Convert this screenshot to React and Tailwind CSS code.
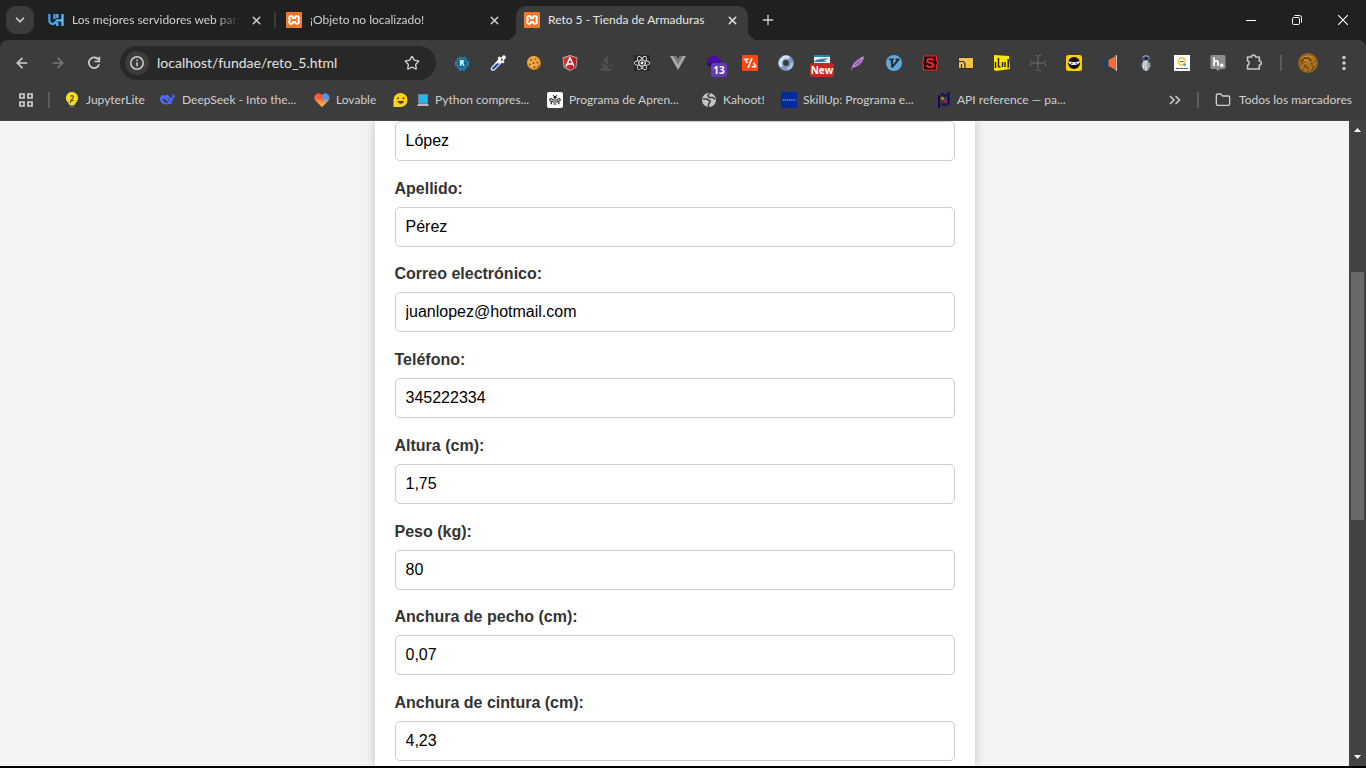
import React from "react";
import { ChevronDown, ArrowLeft, ArrowRight, X, Plus, Star, Folder } from "lucide-react";
import { FaJava, FaReact } from "react-icons/fa";
import { SiXampp } from "react-icons/si";

function XamppIcon() {
  return (
    <span className="flex size-4 shrink-0 rounded-[2px] bg-white">
      <SiXampp className="size-4 text-[#f37623]" />
    </span>
  );
}

function HostIcon() {
  return (
    <svg viewBox="0 0 16 16" className="size-4 shrink-0" aria-hidden="true">
      <defs>
        <linearGradient id="host" x1="0" x2="1">
          <stop offset="0" stopColor="#3d9bff" />
          <stop offset="1" stopColor="#5cc8ff" />
        </linearGradient>
      </defs>
      <path d="M1.300 2v6.500a3.300 3.300 0 0 0 5.800 2.200L9 8.300h5.500M9.300 2v4M9.300 10.500V14M14.500 2v12M6.500 2v5" fill="none" stroke="url(#host)" strokeWidth="2.200" />
    </svg>
  );
}

const svg = "size-4 shrink-0 overflow-visible";

const extensions = [
  {
    name: "R",
    icon: (
      <svg viewBox="0 0 16 16" className={svg}>
        <path d="M5 0l1 2h4l1-2v3h2v3h1v5h-1v2l-2 1v2H9v-1H7v1H5v-2l-2-1v-2H2V6h1V3h2z" fill="#1f7ba6" />
        <path d="M1.500 6v5M14.500 6v5" stroke="#2585b0" />
        <circle cx="8" cy="8.300" r="4.300" fill="#165b80" />
        <text x="8" y="11.200" textAnchor="middle" fontSize="8" fontWeight="700" fill="#fff" fontFamily="Open Sans, sans-serif">R</text>
      </svg>
    ),
  },
  {
    name: "Cuentagotas",
    icon: (
      <svg viewBox="0 0 16 16" className={svg}>
        <path d="M9 3.500L12.500 7 5 15c-1 1-2.800 1-3.600.2-.9-.8-.8-2.200.2-3.200z" fill="#f4f6fa" />
        <path d="M6.500 8.500h3.300L4.500 14.100c-.6.600-1.700.7-2.200.2-.5-.5-.3-1.300.2-1.900z" fill="#2447b5" />
        <path d="M7.500 3L9.300 1.500 11 2.800 13 .6c1.200-1 3.800 1.200 2.500 2.900L13.400 5.500l1.100 1.400L13 8.500z" fill="#fff" />
        <path d="M11 5.500l1.500-1.500" stroke="#222" strokeWidth="1.300" />
      </svg>
    ),
  },
  {
    name: "Cookies",
    icon: (
      <svg viewBox="0 0 16 16" className={svg}>
        <circle cx="8" cy="8" r="7" fill="#c67a20" />
        <circle cx="7.500" cy="7.400" r="6.300" fill="#f0a844" />
        <g fill="#8b4716">
          <circle cx="5" cy="5" r="1" />
          <circle cx="9.500" cy="4" r=".8" />
          <circle cx="11.500" cy="7.500" r="1" />
          <circle cx="7.500" cy="8" r=".9" />
          <circle cx="4" cy="9.500" r=".9" />
          <circle cx="8.500" cy="12" r="1" />
          <circle cx="12" cy="11" r=".7" />
        </g>
      </svg>
    ),
  },
  {
    name: "Angular",
    icon: (
      <svg viewBox="0 0 16 16" className={svg}>
        <path d="M8 0l7.500 2.600-1.200 10L8 16l-6.300-3.400L.5 2.600z" fill="#b9b9b9" />
        <path d="M8 1l6.500 2.300-1 8.700L8 15l-5.500-3-1-8.700z" fill="#d32f2f" />
        <path d="M8 1l6.500 2.300-1 8.700L8 15z" fill="#b52026" />
        <path d="M4 11.500L8 2.800l4 8.700M5.500 9h5" fill="none" stroke="#fff" strokeWidth="1.500" />
      </svg>
    ),
  },
  { name: "Java", icon: <FaJava className="size-4 text-[#6b6b6b]" /> },
  {
    name: "React",
    icon: (
      <span className="flex size-4 items-center justify-center bg-[#292929]">
        <FaReact className="size-4 text-white" />
      </span>
    ),
  },
  {
    name: "Vue",
    icon: (
      <svg viewBox="0 0 16 16" className={svg}>
        <path d="M0 1h6l2 3.500L10 1h6L8 15z" fill="#a8a8a8" />
        <path d="M3.200 1H6l2 3.500L10 1h2.800L8 9.500z" fill="#777" />
      </svg>
    ),
  },
  {
    name: "Capas",
    icon: (
      <svg viewBox="0 0 16 16" className={svg}>
        <path d="M0 9l8-5 8 5-8 5z" fill="#2a0a70" />
        <path d="M0 5l8-5 8 5-8 5z" fill="#4a0da8" />
      </svg>
    ),
    badge: "13",
    badgeClass: "left-[5px] w-4 bg-[#673ab7]",
  },
  {
    name: "Conversor",
    icon: (
      <svg viewBox="0 0 16 16" className={svg}>
        <rect width="16" height="16" rx="1" fill="#ff4713" />
        <path d="M6.500 4.300H2.800L5.500 8M10 3L6 13M14 11.700H9.800M14 11.700L11.500 7.800" fill="none" stroke="#fff" strokeWidth="1.600" />
      </svg>
    ),
  },
  {
    name: "Anillo",
    icon: (
      <svg viewBox="0 0 16 16" className={svg}>
        <circle cx="8" cy="8" r="5.400" fill="none" stroke="#7d9cc0" strokeWidth="5" />
        <path d="M3.500 11.500a6 6 0 0 1 .5-7.500c2-2 5-2.300 7-1" fill="none" stroke="#d6e3ef" strokeWidth="3" />
        <path d="M9.500 14c3.200-.8 4.500-3 4.300-6" fill="none" stroke="#b4cae0" strokeWidth="2" />
      </svg>
    ),
  },
  {
    name: "Selector",
    icon: (
      <svg viewBox="0 0 16 16" className={svg}>
        <path d="M0 0h16v12H0z" fill="#e9eef3" />
        <path d="M0 0h16v2H0zM0 7c1-3 8-3.500 15-3.500L10 5.500l3 1.500z" fill="#327eac" />
      </svg>
    ),
    badge: "New",
    badgeClass: "-left-1 w-6 bg-[#c62828]",
  },
  {
    name: "Pluma",
    icon: (
      <svg viewBox="0 0 16 16" className={svg}>
        <path d="M1 16c0-5 2-9 7-12l6.500-3.500C14 5 12 9 8 11l-4 1.500z" fill="#8e55b5" />
        <path d="M3 12c2-4 5-7 10-10M4 12c4-2 7-5 9-9" fill="none" stroke="#d5a8ee" strokeWidth="1" />
      </svg>
    ),
  },
  {
    name: "Vimium",
    icon: (
      <svg viewBox="0 0 16 16" className={svg}>
        <circle cx="8" cy="8" r="8" fill="#62a8dc" />
        <path d="M3 3.500h5v1.300l-1 .4v4L10.300 5.500 9.500 4.800V3.500H13.500V5L7 12.800H5.200L4.500 5.200 3 4.800z" fill="#263238" />
      </svg>
    ),
  },
  {
    name: "S",
    icon: (
      <svg viewBox="0 0 16 16" className={svg}>
        <path d="M1.500 1h13v5L15.500 7v2l-1 1v5h-13v-5L.5 9V7l1-1z" fill="#270909" stroke="#f12626" strokeWidth="1.100" />
        <text x="8" y="13" textAnchor="middle" fontSize="14" fontWeight="700" fill="#f32b2b" fontFamily="Liberation Sans, sans-serif">S</text>
      </svg>
    ),
  },
  {
    name: "Carpeta",
    icon: (
      <svg viewBox="0 0 16 16" className={svg}>
        <path d="M.5 2.500h15v11H.5z" fill="#f3c14b" stroke="#35301f" />
        <path d="M1 6.500h3c2 0 3 1.300 3 3V13M3.500 13V9" fill="none" stroke="#302b22" strokeWidth="1.200" />
      </svg>
    ),
  },
  {
    name: "Estadísticas",
    icon: (
      <svg viewBox="0 0 16 16" className={svg}>
        <path d="M0 0l15 1 1 13-14 2-2-1z" fill="#ffe500" />
        <path d="M1.500 7v6M4.500 3v9M4.500 12h2M8.500 7v5M11 7v5M14.200 4v9" stroke="#282820" strokeWidth="1.500" />
      </svg>
    ),
  },
  {
    name: "Reglas",
    icon: (
      <svg viewBox="0 0 16 16" className={svg}>
        <path d="M8 1v14M1 8h14M5.500.5h2M9 .5h2M5.500 15.500h2M9 15.500h2M.5 5.500v2M.5 9v2M15.500 5.500v2M15.500 9v2" stroke="#6c6c6c" fill="none" />
      </svg>
    ),
  },
  {
    name: "Ninja",
    icon: (
      <svg viewBox="0 0 16 16" className={svg}>
        <rect width="16" height="16" rx="2.500" fill="#ffce00" />
        <circle cx="8" cy="8" r="6" fill="#111" />
        <path d="M2.200 6c3 1.500 8.600 1.500 11.600 0 .5 5-11.600 5.500-11.600 0z" fill="#fff" />
        <path d="M4.500 7.500l2.500.5-1.300 1zM11.500 7.500L9 8l1.300 1z" fill="#111" />
      </svg>
    ),
  },
  {
    name: "Megáfono",
    icon: (
      <svg viewBox="0 0 16 16" className={svg}>
        <path d="M.5 4.500H7v6H5.500l.5 5H3.500L2 10.500H.5l-1-2v-2z" fill="#263f59" />
        <path d="M6.500 5l7-4v14l-7-4z" fill="#f06c3a" />
        <path d="M14.300 0v16" stroke="#e7edf2" />
      </svg>
    ),
  },
  {
    name: "Robot",
    icon: (
      <svg viewBox="0 0 16 16" className={svg}>
        <ellipse cx="8" cy="10.500" rx="4" ry="5.200" fill="#a2a9ae" />
        <path d="M8 6v10M6 6l-.5 8" stroke="#dde1e4" strokeWidth="1.400" />
        <rect x="4.500" y=".5" width="7" height="5" rx="2.500" fill="#c7cdd1" />
        <rect x="5" y="1.500" width="6" height="3.400" rx="1.700" fill="#14203a" />
        <path d="M6 3h1M9 3h1" stroke="#4b90ff" />
        <path d="M3.500 8v4M12.500 8v4" stroke="#66707a" />
      </svg>
    ),
  },
  {
    name: "Buscador",
    icon: (
      <svg viewBox="0 0 16 16" className={svg}>
        <path d="M0 0h16v16H0z" fill="#fff" />
        <circle cx="7.800" cy="6.500" r="3.500" fill="none" stroke="#f2c230" strokeWidth="1.400" />
        <path d="M6 6.500h3.500" stroke="#555" />
        <path d="M9.500 9l2 1.500" stroke="#3492d4" strokeWidth="1.800" />
        <path d="M2 13.500h12" stroke="#444" strokeDasharray="2 .5" />
      </svg>
    ),
  },
  {
    name: "Hypothesis",
    icon: (
      <svg viewBox="0 0 16 16" className={svg}>
        <path d="M1.500 0h13l1 1v12l-1 1H10l-2 2-2-2H1.500l-1-1V1z" fill="#8d8d8d" />
        <path d="M4 2.500V11M4 7.500c.5-2 4-2.500 4 0V11M11 9.500h1.500V11H11z" fill="none" stroke="#fff" strokeWidth="1.700" />
      </svg>
    ),
  },
  {
    name: "Extensiones",
    icon: (
      <svg viewBox="0 0 16 16" className={svg}>
        <path d="M1.500 2H5.500a2 2 0 0 1 4 0h3.800v4a2 2 0 0 1 0 4v4H1.500v-3.800a2.300 2.300 0 0 0 0-4.400z" fill="none" stroke="#c7c7c7" strokeWidth="1.600" strokeLinejoin="round" />
      </svg>
    ),
  },
];

const bookmarks = [
  {
    text: "JupyterLite",
    width: "w-24",
    icon: (
      <svg viewBox="0 0 16 16" className={svg}>
        <path d="M8 0a6 6 0 0 0-4 10.500L5.500 13h5l1.500-2.500A6 6 0 0 0 8 0z" fill="#f7dc26" />
        <path d="M5.800 13h4.400v1.500L8 16l-2.200-1.500z" fill="#687074" />
        <path d="M6.500 4.500c1-1.300 3.300-1 2.700.8L7 8.500h3M6 11l1.500-3" fill="none" stroke="#5c541b" strokeWidth="1.200" />
      </svg>
    ),
  },
  {
    text: "DeepSeek - Into the...",
    width: "w-[154px]",
    icon: (
      <svg viewBox="0 0 16 16" className={svg}>
        <path d="M15.700 3.200c-.7.500-1.400.6-2 .3-.6-.4-.9-1-1-1.700-.8.700-.9 1.700-.3 2.600.3.600.8 1 1.100 1.400-.4 2-1.300 3.700-2.500 5l1.400 1.200c-1.200.7-2 .3-2.900-.2C4.500 13.700 0 11 0 6.700 0 3.500 3.600 2.200 5.800 3.800c.8-.3.400-1 .8-1.300 1.500.6 3 2 4 3.800l.8-.5c1.500-.3 3.800-.5 4.300-2.600z" fill="#4d6bfe" />
        <path d="M2.500 6.500c2-.5 4.500 2.500 6 4.500-2.500.8-5.700-1.400-6-4.500z" fill="#3c3c3c" />
        <path d="M7.600 6.800c1.200-.3 2 .7 2 2l-1.200-.5" fill="none" stroke="#3c3c3c" strokeWidth=".9" />
      </svg>
    ),
  },
  {
    text: "Lovable",
    width: "w-[79px]",
    icon: (
      <svg viewBox="0 0 16 16" className={svg}>
        <defs>
          <linearGradient id="heart" x1="0" y1=".3" x2="1" y2=".3">
            <stop offset="0" stopColor="#f26b35" />
            <stop offset=".4" stopColor="#f0553c" />
            <stop offset=".65" stopColor="#5f8fe0" />
            <stop offset="1" stopColor="#2f9df2" />
          </linearGradient>
          <linearGradient id="heartlow" x1="0" y1="0" x2="0" y2="1">
            <stop offset=".3" stopColor="#ffa33c" stopOpacity="0" />
            <stop offset=".75" stopColor="#ffa33c" />
          </linearGradient>
        </defs>
        <path d="M8 15L1.500 8.500C-2 4 4-1.500 8 3c4-4.500 10 1 6.500 5.500z" fill="url(#heart)" />
        <path d="M8 15L1.500 8.500C-2 4 4-1.500 8 3c4-4.500 10 1 6.500 5.500z" fill="url(#heartlow)" />
      </svg>
    ),
  },
  {
    text: "Python compres...",
    width: "w-[154px]",
    icon: (
      <span className="flex shrink-0 gap-2">
        <svg viewBox="0 0 16 16" className={svg}>
          <path d="M.5 15V8A7 7 0 1 1 7.500 15z" fill="#ffd21e" />
          <path d="M4.500 9h6.500c-.3 3.500-6 3.500-6.500 0z" fill="#58401f" />
          <circle cx="5" cy="6.300" r="1" fill="#58401f" />
          <circle cx="10.500" cy="6.300" r="1" fill="#58401f" />
        </svg>
        <svg viewBox="0 0 12 16" className="h-4 w-3">
          <path d="M1.500 2.500h9v9h-9z" fill="#23b7ee" stroke="#75818b" />
          <path d="M1 12h10l1 2H0z" fill="#b3bcc3" />
        </svg>
      </span>
    ),
  },
  {
    text: "Programa de Apren...",
    width: "w-[154px]",
    icon: (
      <svg viewBox="0 0 16 16" className={svg}>
        <rect width="16" height="16" rx="2" fill="#fff" />
        <path d="M6 3l1 1.500M10 3L9 4.500" stroke="#222" />
        <circle cx="8" cy="5.200" r="1.500" fill="#222" />
        <path d="M6 8C4 5.500 2 7 3 8.500s2 1 3 .5M10 8c2-2.500 4-1 3 .5s-2 1-3 .5M5.500 9.800C3.500 10 3.500 12 5 12M10.500 9.800c2 .2 2 2.200.5 2.200" fill="none" stroke="#222" strokeWidth="1.100" />
        <path d="M6 8h4M6 10h4M6.500 12h3" stroke="#222" strokeWidth="1.200" />
      </svg>
    ),
  },
  {
    text: "Kahoot!",
    width: "w-20",
    icon: (
      <svg viewBox="0 0 16 16" className={svg}>
        <circle cx="8" cy="8" r="7" fill="#c4c7c9" />
        <path d="M2 7h4l1.500 1.500H9v1.800L7.500 12v3M9 1.500L6.800 3.500l1.200 2h4l2 2" fill="none" stroke="#3c3c3c" strokeWidth="1.500" />
      </svg>
    ),
  },
  {
    text: "SkillUp: Programa e...",
    width: "w-[154px]",
    icon: (
      <svg viewBox="0 0 16 16" className={svg}>
        <path d="M0 0h16v16H0z" fill="#002b9d" />
        <path d="M1.500 8h13" stroke="#9aaee2" strokeDasharray="1.500 .5" />
      </svg>
    ),
  },
  {
    text: "API reference — pa...",
    width: "w-[154px]",
    icon: (
      <svg viewBox="0 0 16 16" className={svg}>
        <path d="M4 3v13M7.500 1v3M7.500 11v3M10.500 2v3M10.500 11.500v3M13.500 0v13" stroke="#150458" strokeWidth="1.900" />
        <path d="M7.500 5.500v2" stroke="#ffca00" strokeWidth="2" />
        <path d="M10.500 8v2" stroke="#e70488" strokeWidth="2" />
      </svg>
    ),
  },
];

const fields = [
  { id: "apellido", label: "Apellido:", value: "Pérez" },
  { id: "correo", label: "Correo electrónico:", value: "juanlopez@hotmail.com", type: "email" },
  { id: "telefono", label: "Teléfono:", value: "345222334", type: "tel" },
  { id: "altura", label: "Altura (cm):", value: "1,75" },
  { id: "peso", label: "Peso (kg):", value: "80" },
  { id: "pecho", label: "Anchura de pecho (cm):", value: "0,07" },
  { id: "cintura", label: "Anchura de cintura (cm):", value: "4,23" },
];

const inputClass =
  "block h-10 w-full rounded-[5px] border border-[#cccccc] bg-white px-[10px] text-base text-black outline-none";

function Tab({ icon, title, active }) {
  return (
    <div
      className={
        active
          ? "relative flex h-[34px] w-[232px] items-center rounded-t-[10px] bg-[#3c3c3c] px-2 pb-[6px] text-[#e8e8e8]"
          : "flex h-[34px] w-[232px] items-center px-2 pb-[6px] text-[#d0d0d0]"
      }
    >
      {active && (
        <>
          <span className="absolute bottom-0 -left-[10px] size-[10px] rounded-br-[10px] shadow-[4px_4px_0_#3c3c3c] [clip-path:inset(0)]" />
          <span className="absolute -right-[10px] bottom-0 size-[10px] rounded-bl-[10px] shadow-[-4px_4px_0_#3c3c3c] [clip-path:inset(0)]" />
        </>
      )}
      {icon}
      <span
        className={
          active
            ? "ml-2 min-w-0 flex-1 overflow-hidden whitespace-nowrap"
            : "ml-2 min-w-0 flex-1 overflow-hidden whitespace-nowrap [mask-image:linear-gradient(to_right,black_calc(100%-24px),transparent)]"
        }
      >
        {title}
      </span>
      <button type="button" aria-label="Cerrar pestaña" className="ml-2 flex size-4 items-center justify-center">
        <X size={13} strokeWidth={2.7} />
      </button>
    </div>
  );
}

function Separator() {
  return <div className="h-4 w-[2px] shrink-0 bg-[#5c5c5c]" />;
}

export default function App() {
  return (
    <div className="flex h-screen flex-col overflow-hidden border-b-2 border-black bg-[#1f2020]">
      <header className="shrink-0 font-['Lato','Open_Sans',sans-serif] text-xs text-[#d0d0d0]">
        <div className="flex h-10 items-end">
          <button type="button" aria-label="Buscar pestañas" className="mb-[6px] ml-[6px] flex size-7 shrink-0 items-center justify-center rounded-[10px] bg-[#3c3c3c]">
            <ChevronDown size={14} strokeWidth={3} />
          </button>
          <nav aria-label="Pestañas" className="ml-[6px] flex items-end">
            <Tab icon={<HostIcon />} title="Los mejores servidores web para" />
            <div className="mx-[2px] mb-3 h-4 w-[2px] bg-[#3c3c3c]" />
            <Tab icon={<XamppIcon />} title="¡Objeto no localizado!" />
            <div className="ml-[6px]">
              <Tab icon={<XamppIcon />} title="Reto 5 - Tienda de Armaduras" active />
            </div>
          </nav>
          <button type="button" aria-label="Nueva pestaña" className="mb-3 ml-3 flex size-4 items-center justify-center">
            <Plus size={16} strokeWidth={2} />
          </button>
          <div className="ml-auto flex self-stretch text-white">
            <button type="button" aria-label="Minimizar" className="flex w-[46px] items-center justify-center">
              <svg viewBox="0 0 10 10" className="size-[10px]"><path d="M0 5.500h10" stroke="currentColor" /></svg>
            </button>
            <button type="button" aria-label="Restaurar" className="flex w-[46px] items-center justify-center">
              <svg viewBox="0 0 10 10" className="size-[10px] overflow-visible">
                <rect x=".5" y="2.500" width="7" height="7" rx="1.200" fill="none" stroke="currentColor" />
                <path d="M2.500.5H7.500A2 2 0 0 1 9.500 2.500v5" fill="none" stroke="currentColor" />
              </svg>
            </button>
            <button type="button" aria-label="Cerrar" className="flex w-[46px] items-center justify-center">
              <svg viewBox="0 0 10 10" className="size-[10px]"><path d="M0 0l10 10M10 0L0 10" stroke="currentColor" strokeWidth="1.100" /></svg>
            </button>
          </div>
        </div>

        <div className="h-[81px] rounded-t-[8px] border-b border-[#474747] bg-[#3c3c3c]">
          <div className="flex h-[46px] items-center pl-[14px]">
            <div className="flex gap-5">
              <button type="button" aria-label="Atrás"><ArrowLeft size={16} strokeWidth={2.5} /></button>
              <button type="button" aria-label="Adelante" className="text-[#777777]"><ArrowRight size={16} strokeWidth={2.5} /></button>
              <button type="button" aria-label="Recargar">
                <svg viewBox="0 0 16 16" className="size-4">
                  <path d="M12.600 4.900A5.300 5.300 0 1 0 13.200 9.200" fill="none" stroke="currentColor" strokeWidth="1.700" />
                  <path d="M13.300 1.800v4.700H8.600" fill="none" stroke="currentColor" strokeWidth="1.700" />
                </svg>
              </button>
            </div>
            <div className="ml-[18px] flex h-[34px] w-[316px] shrink-0 items-center rounded-full bg-[#282828] pr-4 pl-[5px]">
              <button type="button" aria-label="Información del sitio" className="flex size-6 shrink-0 items-center justify-center rounded-full bg-[#3c3c3c]">
                <svg viewBox="0 0 16 16" className="size-4">
                  <circle cx="8" cy="8" r="6.200" fill="none" stroke="currentColor" strokeWidth="1.500" />
                  <path d="M8 7.200v4M8 4.500V6" stroke="currentColor" strokeWidth="1.500" />
                </svg>
              </button>
              <input
                aria-label="Dirección"
                className="ml-2 min-w-0 flex-1 bg-transparent text-sm text-[#e3e3e3] outline-none"
                defaultValue="localhost/fundae/reto_5.html"
              />
              <button type="button" aria-label="Añadir a marcadores"><Star size={16} strokeWidth={2} /></button>
            </div>
            <div className="ml-2 flex min-w-0 flex-1 items-center">
              {extensions.map((item) => (
                <button key={item.name} type="button" aria-label={item.name} className="flex w-9 shrink-0 items-center justify-center">
                  <span className="relative size-4">
                    {item.icon}
                    {item.badge && (
                      <span className={`absolute top-2 flex h-[14px] items-center justify-center rounded-[3px] font-['Open_Sans',sans-serif] text-[10px] leading-none font-bold text-white ${item.badgeClass}`}>
                        {item.badge}
                      </span>
                    )}
                  </span>
                </button>
              ))}
              <div className="ml-2"><Separator /></div>
            </div>
            <button type="button" aria-label="Perfil" className="mr-[17px]">
              <svg viewBox="0 0 20 20" className="size-5">
                <circle cx="10" cy="10" r="10" fill="#986018" />
                <path d="M3 6c4-4 10-4 14 0M2 10c2-5 8-5 9-1s5 4 7 1M4 15c1-6 6-5 7-2s4 2 5-1M7 18c0-3 3-3 5-1M6 8c2-2 4 0 3 2M12 5c2 0 4 2 3 4" fill="none" stroke="#d89d3c" strokeWidth="1" />
                <path d="M3 8c3-4 7-3 10-1M5 13c3-2 3 3 6 3M13 11c2 0 3 3 1 5M8 5c-3 0-4 2-5 5" fill="none" stroke="#5e3509" />
              </svg>
            </button>
            <button type="button" aria-label="Menú" className="mr-[13px]">
              <svg viewBox="0 0 18 16" className="h-4 w-[18px]" fill="currentColor">
                <circle cx="9" cy="2.500" r="1.700" /><circle cx="9" cy="8" r="1.700" /><circle cx="9" cy="13.500" r="1.700" />
              </svg>
            </button>
          </div>

          <div className="flex h-7 items-center pl-[18px]">
            <button type="button" aria-label="Grupos de pestañas">
              <svg viewBox="0 0 16 16" className="size-4">
                <path d="M2 2h4v4H2zM10 2h4v4h-4zM2 10h4v4H2zM10 10h4v4h-4z" fill="none" stroke="currentColor" strokeWidth="1.700" />
              </svg>
            </button>
            <div className="mx-[14px]"><Separator /></div>
            <nav aria-label="Marcadores" className="flex min-w-0 flex-1">
              {bookmarks.map((item) => (
                <a key={item.text} href="#" className={`flex shrink-0 items-center gap-[6px] whitespace-nowrap ${item.width}`}>
                  {item.icon}
                  {item.text}
                </a>
              ))}
            </nav>
            <button type="button" aria-label="Más marcadores">
              <svg viewBox="0 0 16 16" className="size-4">
                <path d="M3 4l4 4-4 4M8.500 4l4 4-4 4" fill="none" stroke="currentColor" strokeWidth="1.500" />
              </svg>
            </button>
            <div className="mr-4 ml-[14px]"><Separator /></div>
            <a href="#" className="mr-[14px] flex items-center gap-2 whitespace-nowrap">
              <Folder size={16} strokeWidth={2} />
              Todos los marcadores
            </a>
          </div>
        </div>
      </header>

      <div className="flex min-h-0 flex-1">
        <main className="flex flex-1 justify-center overflow-hidden bg-[#f2f3f5] font-['Liberation_Sans',Arial,sans-serif]">
          <form className="flex w-full max-w-[600px] flex-col justify-between bg-white px-5 pb-[5px] shadow-[0_0_10px_rgba(0,0,0,0.2)]">
            <input aria-label="Nombre" className={inputClass} defaultValue="López" />
            {fields.map((field) => (
              <div key={field.id} className="flex flex-col gap-[6px]">
                <label htmlFor={field.id} className="text-base leading-6 font-bold text-[#333333]">{field.label}</label>
                <input id={field.id} type={field.type || "text"} className={inputClass} defaultValue={field.value} />
              </div>
            ))}
          </form>
        </main>
        <div aria-hidden="true" className="flex w-[17px] shrink-0 flex-col items-center bg-[#424242]">
          <svg viewBox="0 0 17 17" className="h-[17px] w-[17px]"><path d="M5 11l3.500-4 3.500 4z" fill="#fff" /></svg>
          <div className="mt-[134px] h-[248px] w-[13px] bg-[#686868]" />
          <svg viewBox="0 0 17 17" className="mt-auto h-[17px] w-[17px]"><path d="M5 6l3.500 4L12 6z" fill="#fff" /></svg>
        </div>
      </div>
    </div>
  );
}
